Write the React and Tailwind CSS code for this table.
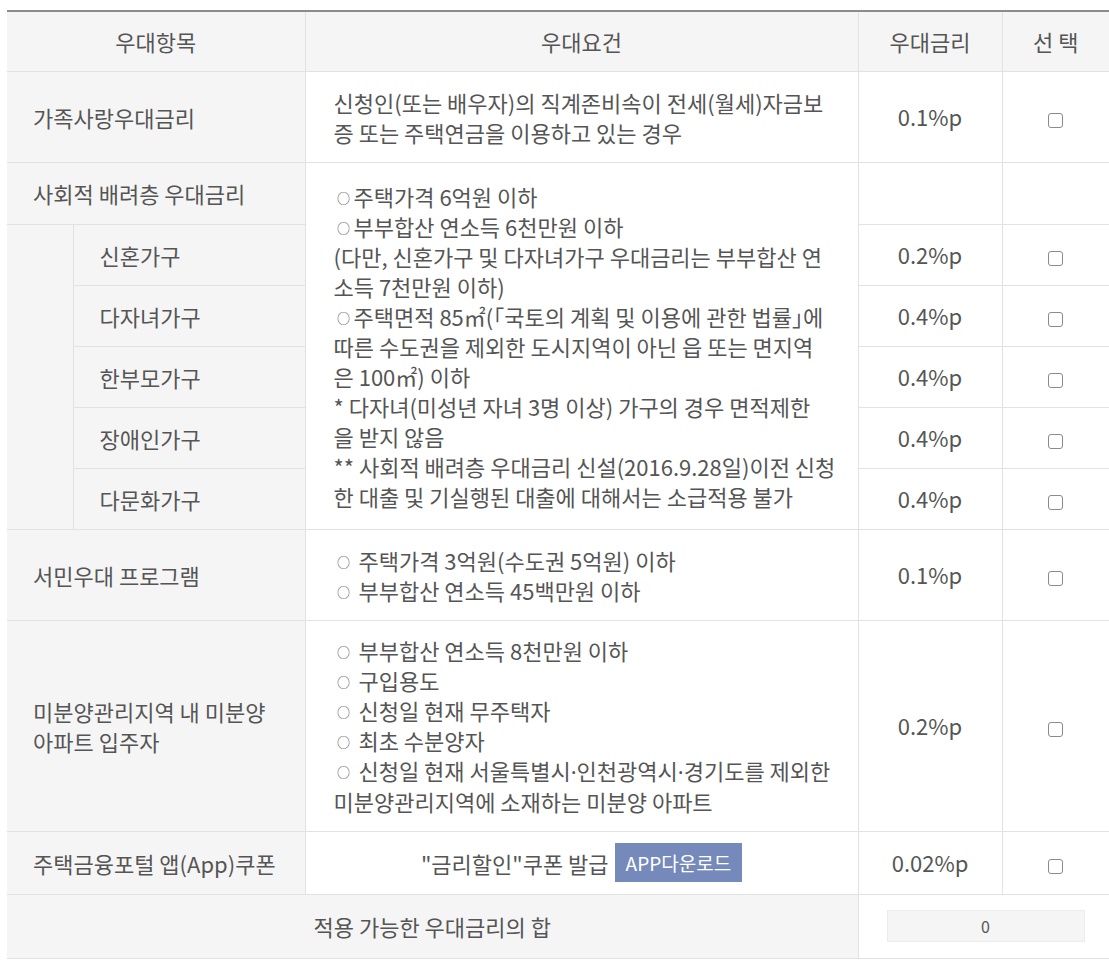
import React from 'react';

const font = { fontFamily: '"Noto Sans CJK KR", "Noto Sans", sans-serif' };

const subRows = [
  { name: '신혼가구', rate: '0.2%p' },
  { name: '다자녀가구', rate: '0.4%p' },
  { name: '한부모가구', rate: '0.4%p' },
  { name: '장애인가구', rate: '0.4%p' },
  { name: '다문화가구', rate: '0.4%p' },
];

// small circle bullet, as in the original page
const O = ({ gap }) => (
  <>
    <span className="inline-block w-[20px] text-[13px] leading-none text-center align-[3px]">○</span>
    {gap ? ' ' : ''}
  </>
);

const Dot = () => <span className="[font-family:'Noto_Sans',sans-serif]">·</span>;
const H = ({ children }) => <span className="[font-feature-settings:'halt']">{children}</span>;

const socialLines = [
  <><O />주택가격 6억원 이하</>,
  <><O />부부합산 연소득 6천만원 이하</>,
  '(다만, 신혼가구 및 다자녀가구 우대금리는 부부합산 연',
  '소득 7천만원 이하)',
  <><O />주택면적 85㎡(<H>「</H>국토의 계획 및 이용에 관한 법률<H>」</H>에</>,
  '따른 수도권을 제외한 도시지역이 아닌 읍 또는 면지역',
  '은 100㎡) 이하',
  '* 다자녀(미성년 자녀 3명 이상) 가구의 경우 면적제한',
  '을 받지 않음',
  '** 사회적 배려층 우대금리 신설(2016.9.28일)이전 신청',
  '한 대출 및 기실행된 대출에 대해서는 소급적용 불가',
];

const unsoldLines = [
  <><O gap />부부합산 연소득 8천만원 이하</>,
  <><O gap />구입용도</>,
  <><O gap />신청일 현재 무주택자</>,
  <><O gap />최초 수분양자</>,
  <><O gap />신청일 현재 서울특별시<Dot />인천광역시<Dot />경기도를 제외한</>,
  '미분양관리지역에 소재하는 미분양 아파트',
];

const Check = () => (
  <span className="inline-block w-[15px] h-[15px] border border-[#8a8a8a] rounded-[3px] bg-white align-middle" />
);

const Lines = ({ lines }) => (
  <div className="leading-[30px]">
    {lines.map((l, i) => (
      <div key={i} className="whitespace-nowrap">{l}</div>
    ))}
  </div>
);

const th = 'border border-[#e2e2e2] bg-[#f5f5f5] font-normal text-center';
const tdL = 'border border-[#e2e2e2] bg-[#f5f5f5] text-left pl-[26px] pr-[10px] leading-[30px]';
const tdC = 'border border-[#e2e2e2] bg-white pl-[28px] pr-[10px]';
const tdR = 'border border-[#e2e2e2] bg-white text-center';

export default function App() {
  return (
    <div className="bg-white min-h-[963px] pt-[10px] pl-[7px]" style={font}>
      <table className="table-fixed border-collapse w-[1102px] text-[22px] text-[#555] border-t-2 border-t-[#8c8c8c]">
        <colgroup>
          <col className="w-[66px]" />
          <col className="w-[232px]" />
          <col className="w-[553px]" />
          <col className="w-[144px]" />
          <col className="w-[107px]" />
        </colgroup>
        <thead>
          <tr className="h-[60px]">
            <th colSpan={2} className={th + ' border-l-0 border-t-0'}>우대항목</th>
            <th className={th + ' border-t-0'}>우대요건</th>
            <th className={th + ' border-t-0'}>우대금리</th>
            <th className={th + ' border-t-0 border-r-0'}>선 택</th>
          </tr>
        </thead>
        <tbody>
          <tr className="h-[91px]">
            <td colSpan={2} className={tdL + ' border-l-0'}>가족사랑우대금리</td>
            <td className={tdC}>
              <Lines lines={['신청인(또는 배우자)의 직계존비속이 전세(월세)자금보', '증 또는 주택연금을 이용하고 있는 경우']} />
            </td>
            <td className={tdR}>0.1%p</td>
            <td className={tdR + ' border-r-0'}><Check /></td>
          </tr>
          <tr className="h-[62px]">
            <td colSpan={2} className={tdL + ' border-l-0'}>사회적 배려층 우대금리</td>
            <td rowSpan={6} className={tdC}>
              <Lines lines={socialLines} />
            </td>
            <td className={tdR}></td>
            <td className={tdR + ' border-r-0'}></td>
          </tr>
          {subRows.map((r, i) => (
            <tr key={r.name} className="h-[61px]">
              {i === 0 && <td rowSpan={5} className={tdL + ' border-l-0 border-t-0'}></td>}
              <td className={tdL}>{r.name}</td>
              <td className={tdR}>{r.rate}</td>
              <td className={tdR + ' border-r-0'}><Check /></td>
            </tr>
          ))}
          <tr className="h-[91px]">
            <td colSpan={2} className={tdL + ' border-l-0'}>서민우대 프로그램</td>
            <td className={tdC}>
              <Lines lines={[<><O gap />주택가격 3억원(수도권 5억원) 이하</>, <><O gap />부부합산 연소득 45백만원 이하</>]} />
            </td>
            <td className={tdR}>0.1%p</td>
            <td className={tdR + ' border-r-0'}><Check /></td>
          </tr>
          <tr className="h-[211px]">
            <td colSpan={2} className={tdL + ' border-l-0'}>미분양관리지역 내 미분양<br />아파트 입주자</td>
            <td className={tdC}>
              <Lines lines={unsoldLines} />
            </td>
            <td className={tdR}>0.2%p</td>
            <td className={tdR + ' border-r-0'}><Check /></td>
          </tr>
          <tr className="h-[63px]">
            <td colSpan={2} className={tdL + ' border-l-0'}>주택금융포털 앱(App)쿠폰</td>
            <td className="border border-[#e2e2e2] bg-white text-center">
              <span className="align-middle">"금리할인"쿠폰 발급</span>
              <span className="inline-block align-middle ml-[6px] bg-[#7689bb] text-white text-[19px] leading-[39px] px-[11px]">APP다운로드</span>
            </td>
            <td className={tdR}>0.02%p</td>
            <td className={tdR + ' border-r-0'}><Check /></td>
          </tr>
          <tr className="h-[64px]">
            <td colSpan={3} className="border border-[#e2e2e2] border-l-0 bg-[#f5f5f5] text-center">적용 가능한 우대금리의 합</td>
            <td colSpan={2} className="border border-[#e2e2e2] border-r-0 bg-white">
              <div className="ml-[28px] w-[198px] h-[32px] bg-[#f5f5f5] border border-[#ececec] flex items-center justify-center text-[16px] text-[#555]">0</div>
            </td>
          </tr>
        </tbody>
      </table>
    </div>
  );
}
